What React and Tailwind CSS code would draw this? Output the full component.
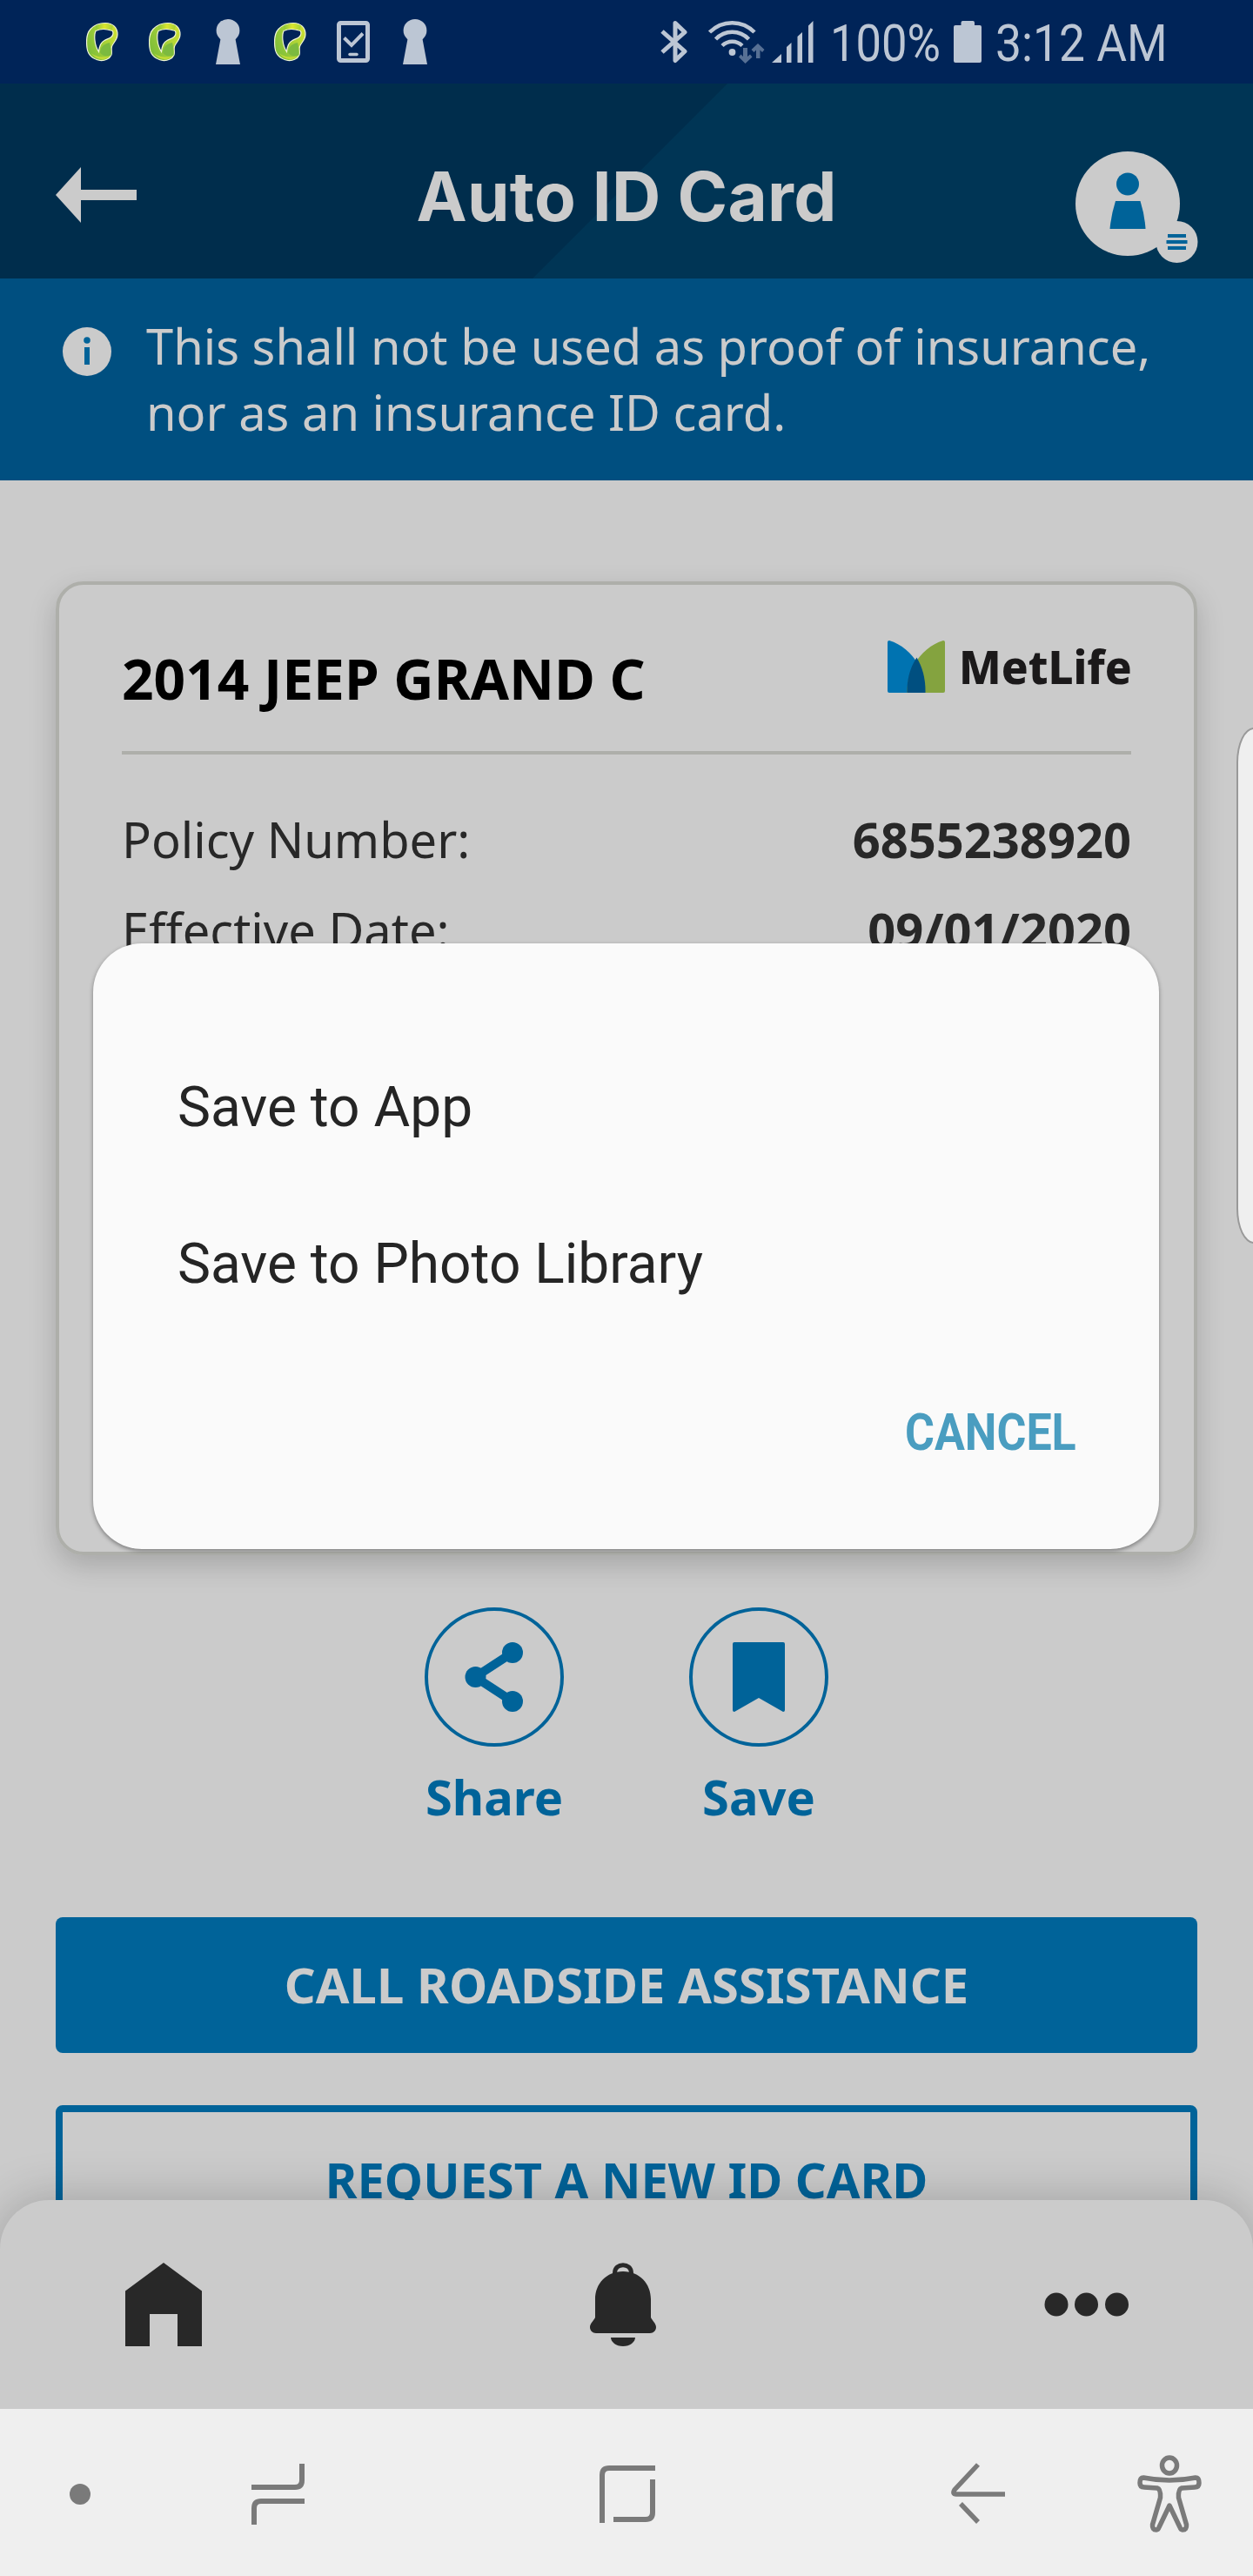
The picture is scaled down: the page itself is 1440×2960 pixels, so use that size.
import React from "react";

const NOTO = "font-['Noto_Sans',sans-serif]";
const ROBOTO = "font-['Roboto',sans-serif]";

function RibbonIcon() {
  return (
    <svg width="38" height="46" viewBox="0 0 38 46" className="shrink-0">
      <defs>
        <linearGradient id="ribbon" x1="0" y1="0.7" x2="1" y2="0.2">
          <stop offset="0" stopColor="#7cbd3a" />
          <stop offset="0.5" stopColor="#a3cf38" />
          <stop offset="1" stopColor="#cfe032" />
        </linearGradient>
        <linearGradient id="band" x1="0" y1="0" x2="1" y2="0">
          <stop offset="0" stopColor="#8cc63a" />
          <stop offset="0.5" stopColor="#dde62e" />
          <stop offset="1" stopColor="#a3cf38" />
        </linearGradient>
      </defs>
      <path
        fillRule="evenodd"
        fill="url(#ribbon)"
        stroke="#f1f6d8"
        strokeWidth="1.2"
        d="M22 1.500C31 1.500 36 7 36 14.500C36 21 31 24 29.500 28.500C28.500 32 30 34 29 38C27 43 21 45 16 44.500C8 43 2 38 1 30C0 22 0 14 5 8.500C9 4 15 1.500 22 1.500ZM11 10.500C9 15 9 26 14.500 34.500C15 29 16 24 21 21.500C26 19 31 18 31 13C31 11 30 10 28.500 10C23 8 16 8 11 10.500Z"
      />
      <path d="M11 4.500C18 1.500 25 1.500 31 4.500L29.500 9.500C23 7.500 17 7.500 11.500 9.500Z" fill="url(#band)" />
      <path d="M16 35C17 29 19 26 27 24C28 28 29 34 28.500 38.500C23 41 18 39 16 35Z" fill="#7cba3f" />
      <path d="M6 36C10 40 20 42 27 39.500C23 44.500 11 44.500 6 36Z" fill="#c3db35" />
    </svg>
  );
}

function KeyholeIcon() {
  return (
    <svg width="28" height="52" viewBox="0 0 28 52" className="shrink-0" fill="#bcc6d4">
      <ellipse cx="14" cy="13" rx="13.400" ry="13" />
      <path d="M6 20H22L28 52H0Z" />
    </svg>
  );
}

function PhoneCheckIcon() {
  return (
    <svg width="38" height="48" viewBox="0 0 38 48" className="shrink-0" fill="none" stroke="#bcc6d4">
      <rect x="2.500" y="2.500" width="33" height="43" rx="2" strokeWidth="5" />
      <path d="M8.500 19.500L17 28L30 14.500" strokeWidth="4" />
      <path d="M15 38.500H23" strokeWidth="3.500" strokeLinecap="round" />
    </svg>
  );
}

function StatusBar() {
  return (
    <div className="flex h-24 bg-[#002458] text-[#bcc6d4]">
      <div className="ml-[99px] flex h-24 items-center gap-[34px]">
        <RibbonIcon />
        <RibbonIcon />
        <span className="ml-[4px] flex w-[29px] justify-center">
          <KeyholeIcon />
        </span>
        <span className="ml-[5px]"><RibbonIcon /></span>
        <PhoneCheckIcon />
        <span className="ml-[4px]"><KeyholeIcon /></span>
      </div>
      <div className="ml-[268px] flex h-24 items-center">
        <svg width="32" height="50" viewBox="0 0 32 50" fill="none" stroke="currentColor" strokeWidth="5">
          <path d="M2 13L28 36L17 46.500V3.500L28 14L2 37" strokeLinejoin="round" />
        </svg>
        <svg width="66" height="50" viewBox="0 0 66 50" className="ml-[22px]" fill="none">
          <g stroke="currentColor" strokeWidth="4.500">
            <path d="M2.500 14C17 -.5 40 -.5 54 14" />
            <path d="M9.500 22C20 11 37 11 47.500 22" />
            <path d="M17 29.500C23.500 23 33.500 23 40 29.500" />
          </g>
          <circle cx="28.500" cy="37" r="3.900" fill="currentColor" />
          <path d="M41 32H46V42L49 39.500L51.500 42.500L43.500 50L36 42.500L38.500 39.500L41 42ZM56 44V34.500L53.500 37L50.500 34L58 27L65.500 34L63 37L60.500 34.500V44Z" fill="#577094" />
        </svg>
        <svg width="48" height="48" viewBox="0 0 48 48" className="ml-[8px]" fill="currentColor">
          <path d="M0 48L11 38V48ZM17 30L22.500 25V48H17ZM29.500 18L35 13V48H29.500ZM42 5.500L47.500 0V48H42Z" />
        </svg>
        <span className={ROBOTO + " ml-[19px] mt-[4px] w-[127px] whitespace-nowrap text-[60px] leading-[60px]"}>
          <span className="inline-block origin-left scale-x-[0.875]">100%</span>
        </span>
        <svg width="32" height="48" viewBox="0 0 32 48" className="ml-[15px]" fill="currentColor">
          <path d="M8.500 5V2Q8.500 0 10.500 0H22Q24 0 24 2V5H30Q32 5 32 7V46Q32 48 30 48H2Q0 48 0 46V7Q0 5 2 5Z" />
        </svg>
        <span className={ROBOTO + " ml-[16px] mt-[4px] w-[195px] whitespace-nowrap text-[60px] leading-[60px]"}>
          <span className="inline-block origin-left scale-x-[0.89]">3:12 AM</span>
        </span>
      </div>
    </div>
  );
}

function Header() {
  return (
    <header className="grid h-[224px] grid-cols-[400px_640px_400px] bg-[linear-gradient(135deg,#002d4c_0,#002d4c_calc(50%_+_2.500px),#003555_calc(50%_+_3.500px))]">
      <svg width="93" height="64" viewBox="0 0 93 64" className="ml-16 mt-24" fill="#cbcbcb">
        <path d="M0 32L29 0V26H93V38H29V64Z" />
      </svg>
      <h1 className="mt-[82px] text-center font-['Inter',sans-serif] text-[78px] font-bold leading-[96px] tracking-[0.3px] text-[#cbcbcb]">
        Auto ID Card
      </h1>
      <svg width="141" height="130" viewBox="0 0 141 130" className="ml-[196px] mt-[76px]">
        <circle cx="60" cy="62" r="60" fill="#cbcbcb" />
        <circle cx="60" cy="39.500" r="13" fill="#006399" />
        <path d="M46 59H74.500Q79.500 75 80.500 91H39.500Q41 75 46 59Z" fill="#006399" />
        <circle cx="116.500" cy="106" r="24" fill="#cbcbcb" />
        <path d="M106 99H127M104.500 106H128.500M106 113H127" stroke="#006399" strokeWidth="4" />
      </svg>
    </header>
  );
}

function Banner() {
  return (
    <div className="flex h-[232px] bg-[#004f80] text-[#cbcbcb]">
      <svg width="56" height="56" viewBox="0 0 56 56" className="ml-[72px] mt-[56px] shrink-0">
        <circle cx="28" cy="28" r="28" fill="#cbcbcb" />
        <circle cx="28" cy="15" r="3.800" fill="#006399" />
        <path d="M25 23H31V43H25Z" fill="#006399" />
      </svg>
      <p className={NOTO + " ml-[40px] mt-[39px] whitespace-nowrap text-[56px] leading-[76px]"}>
        This shall not be used as proof of insurance,
        <br />
        nor as an insurance ID card.
      </p>
    </div>
  );
}

function Logo() {
  return (
    <div className="flex h-[60px] items-center">
      <svg width="66" height="60" viewBox="0 0 66 60">
        <path d="M0 2Q0 0 2 0C25 7 44 31 43.500 60H2Q0 60 0 58Z" fill="#0073b1" />
        <path d="M66 2Q66 0 64 0C41 7 22 31 22.500 60H64Q66 60 66 58Z" fill="#84a33f" />
        <path d="M33.500 19.500C26 31 22 45 22.500 60H43.500C43.800 45 40.500 31 33.500 19.500Z" fill="#004f80" />
      </svg>
      <span className={NOTO + " -mt-[2px] ml-[16px] w-[198px] whitespace-nowrap text-[54px] font-extrabold leading-[60px] text-[#1b191a]"}>
        <span className="inline-block origin-left scale-x-[0.945]">MetLife</span>
      </span>
    </div>
  );
}

function Row({ label, value }) {
  return (
    <div className="flex h-[104px] items-center justify-between">
      <span>{label}</span>
      <b className="font-bold">{value}</b>
    </div>
  );
}

function Action({ label, children }) {
  return (
    <div className="flex w-40 flex-col items-center">
      <div className="flex size-40 items-center justify-center rounded-full border-4 border-[#006399]">{children}</div>
      <span className="mt-[19px] text-[56px] font-bold leading-[76px]">{label}</span>
    </div>
  );
}

function Dialog() {
  return (
    <div className={ROBOTO + " absolute left-[107px] top-[1084px] flex h-[696px] w-[1225px] flex-col rounded-[56px] bg-[#fafafa] px-[97px] pt-[143px] text-[64px] text-[#252525] shadow-[0_2px_5px_rgba(0,0,0,0.4)]"}>
      <span className="leading-[92px]">Save to App</span>
      <span className="mt-[88px] leading-[92px]">Save to Photo Library</span>
      <span className="mt-[107px] w-[195px] self-end text-[60px] font-bold leading-[80px] text-[#4a9dc0]">
        <span className="inline-block origin-left scale-x-[0.865]">CANCEL</span>
      </span>
    </div>
  );
}

function TabBar() {
  return (
    <nav className="relative -mt-12 flex h-[240px] items-start rounded-t-[56px] bg-[#cbcbcb] pt-[72px] text-[#282828] shadow-[0_0_56px_rgba(0,0,0,0.22)]">
      <svg width="88" height="96" viewBox="0 0 88 96" className="ml-36" fill="currentColor">
        <path d="M0 32.500L44 0L88 32.500V96H60V59H28V96H0Z" />
      </svg>
      <svg width="76" height="96" viewBox="0 0 76 96" className="ml-[446px]" fill="currentColor">
        <path d="M28.500 15V12C28.500 -.5 47.500 -.5 47.500 12V15" fill="none" stroke="currentColor" strokeWidth="5" />
        <path d="M38 10C57 10 70 24 70 42V63C72 67 76 70 76 74C76 78 73 81 69 81H7C3 81 0 78 0 74C0 70 4 67 6 63V42C6 24 19 10 38 10Z" />
        <path d="M24 86H52C52 91 46 96 38 96S24 91 24 86Z" />
      </svg>
      <svg width="98" height="28" viewBox="0 0 98 28" className="ml-[446px] mt-[34px]" fill="currentColor">
        <circle cx="14" cy="14" r="13.500" />
        <circle cx="48.500" cy="14" r="13.500" />
        <circle cx="83.500" cy="14" r="13.500" />
      </svg>
    </nav>
  );
}

function SystemNav() {
  return (
    <div className="relative flex h-48 items-center bg-[#efefef]">
      <span className="ml-20 mt-1 size-6 rounded-full bg-[#7a7a7a]" />
      <svg width="62" height="72" viewBox="0 0 62 72" className="ml-[185px] mt-1" fill="none" stroke="#7a7a7a" strokeWidth="6">
        <path d="M0 28H50Q58 28 58 20V1M3 71V52Q3 44 11 44H61" />
      </svg>
      <svg width="64" height="66" viewBox="0 0 64 66" className="ml-[338px] mt-1" fill="none" stroke="#7a7a7a" strokeWidth="6">
        <path d="M3 66V11Q3 3 11 3H64M61 16V54Q61 62 53 62H16" />
      </svg>
      <svg width="64" height="72" viewBox="0 0 64 72" className="ml-[340px] mt-1" fill="none" stroke="#7a7a7a" strokeWidth="5.500">
        <path d="M31 2L4 31Q1 36 6 36H62M11 47L31 68" />
      </svg>
      <svg width="74" height="90" viewBox="0 0 74 90" className="ml-[150px] mt-1" fill="none" stroke="#7a7a7a" strokeWidth="5.500" strokeLinejoin="round">
        <ellipse cx="37" cy="12" rx="8.500" ry="9" />
        <path d="M7 26Q37 32 67 26Q71 26 71 32Q71 37 66 37L51 38Q47 39 47.500 49L56.500 80Q57 86 52 86Q50 86 49 83L37 58L25 83Q24 86 22 86Q17 86 17.500 80L26.500 49Q27 39 23 38L8 37Q3 37 3 32Q3 26 7 26Z" />
      </svg>
    </div>
  );
}

export default function App() {
  return (
    <div className={NOTO + " relative h-[2960px] w-[1440px] overflow-hidden bg-[#cbcbcb]"}>
      <StatusBar />
      <Header />
      <Banner />
      <main className="flex h-[2024px] flex-col overflow-hidden px-16 pt-[116px] text-[#282828]">
        <section className="h-[1119px] shrink-0 rounded-[32px] border-4 border-[#aeafaa] px-[72px] shadow-[0_12px_32px_rgba(0,0,0,0.18)]">
          <div className="flex h-[195px] justify-between border-b-4 border-[#aeafaa] pt-[64px]">
            <h2 className="text-[64px] font-bold leading-[87px] text-black">2014 JEEP GRAND C</h2>
            <Logo />
          </div>
          <div className="mt-[45px] text-[56px]">
            <Row label="Policy Number:" value="6855238920" />
            <Row label="Effective Date:" value="09/01/2020" />
          </div>
        </section>
        <div className="mt-[60px] flex justify-center gap-36 text-[#006399]">
          <Action label="Share">
            <svg width="68" height="80" viewBox="0 0 68 80" fill="#006399">
              <path d="M55 12L12 40L55 68" fill="none" stroke="#006399" strokeWidth="10" />
              <circle cx="55" cy="12" r="12" />
              <circle cx="12.500" cy="40" r="12" />
              <circle cx="55" cy="68" r="12" />
            </svg>
          </Action>
          <Action label="Save">
            <svg width="60" height="80" viewBox="0 0 60 80" fill="#006399">
              <path d="M2 0H58Q60 0 60 2V78Q60 80 58 80L30 64L2 80Q0 80 0 78V2Q0 0 2 0Z" />
            </svg>
          </Action>
        </div>
        <button className="mt-[101px] h-[156px] shrink-0 rounded-lg bg-[#006399] pb-[2px] text-[56px] font-bold leading-[76px] tracking-[0.1px] text-[#cbcbcb]">
          CALL ROADSIDE ASSISTANCE
        </button>
        <button className="mt-[60px] h-[170px] shrink-0 rounded-lg border-8 border-[#006399] text-[56px] font-bold leading-[76px] text-[#006399]">
          REQUEST A NEW ID CARD
        </button>
      </main>
      <TabBar />
      <SystemNav />
      <Dialog />
      <div className="absolute left-[1421px] top-[836px] h-[593px] w-[40px] rounded-[20px/40px] border-2 border-[#999] bg-[#efefef]" />
    </div>
  );
}
